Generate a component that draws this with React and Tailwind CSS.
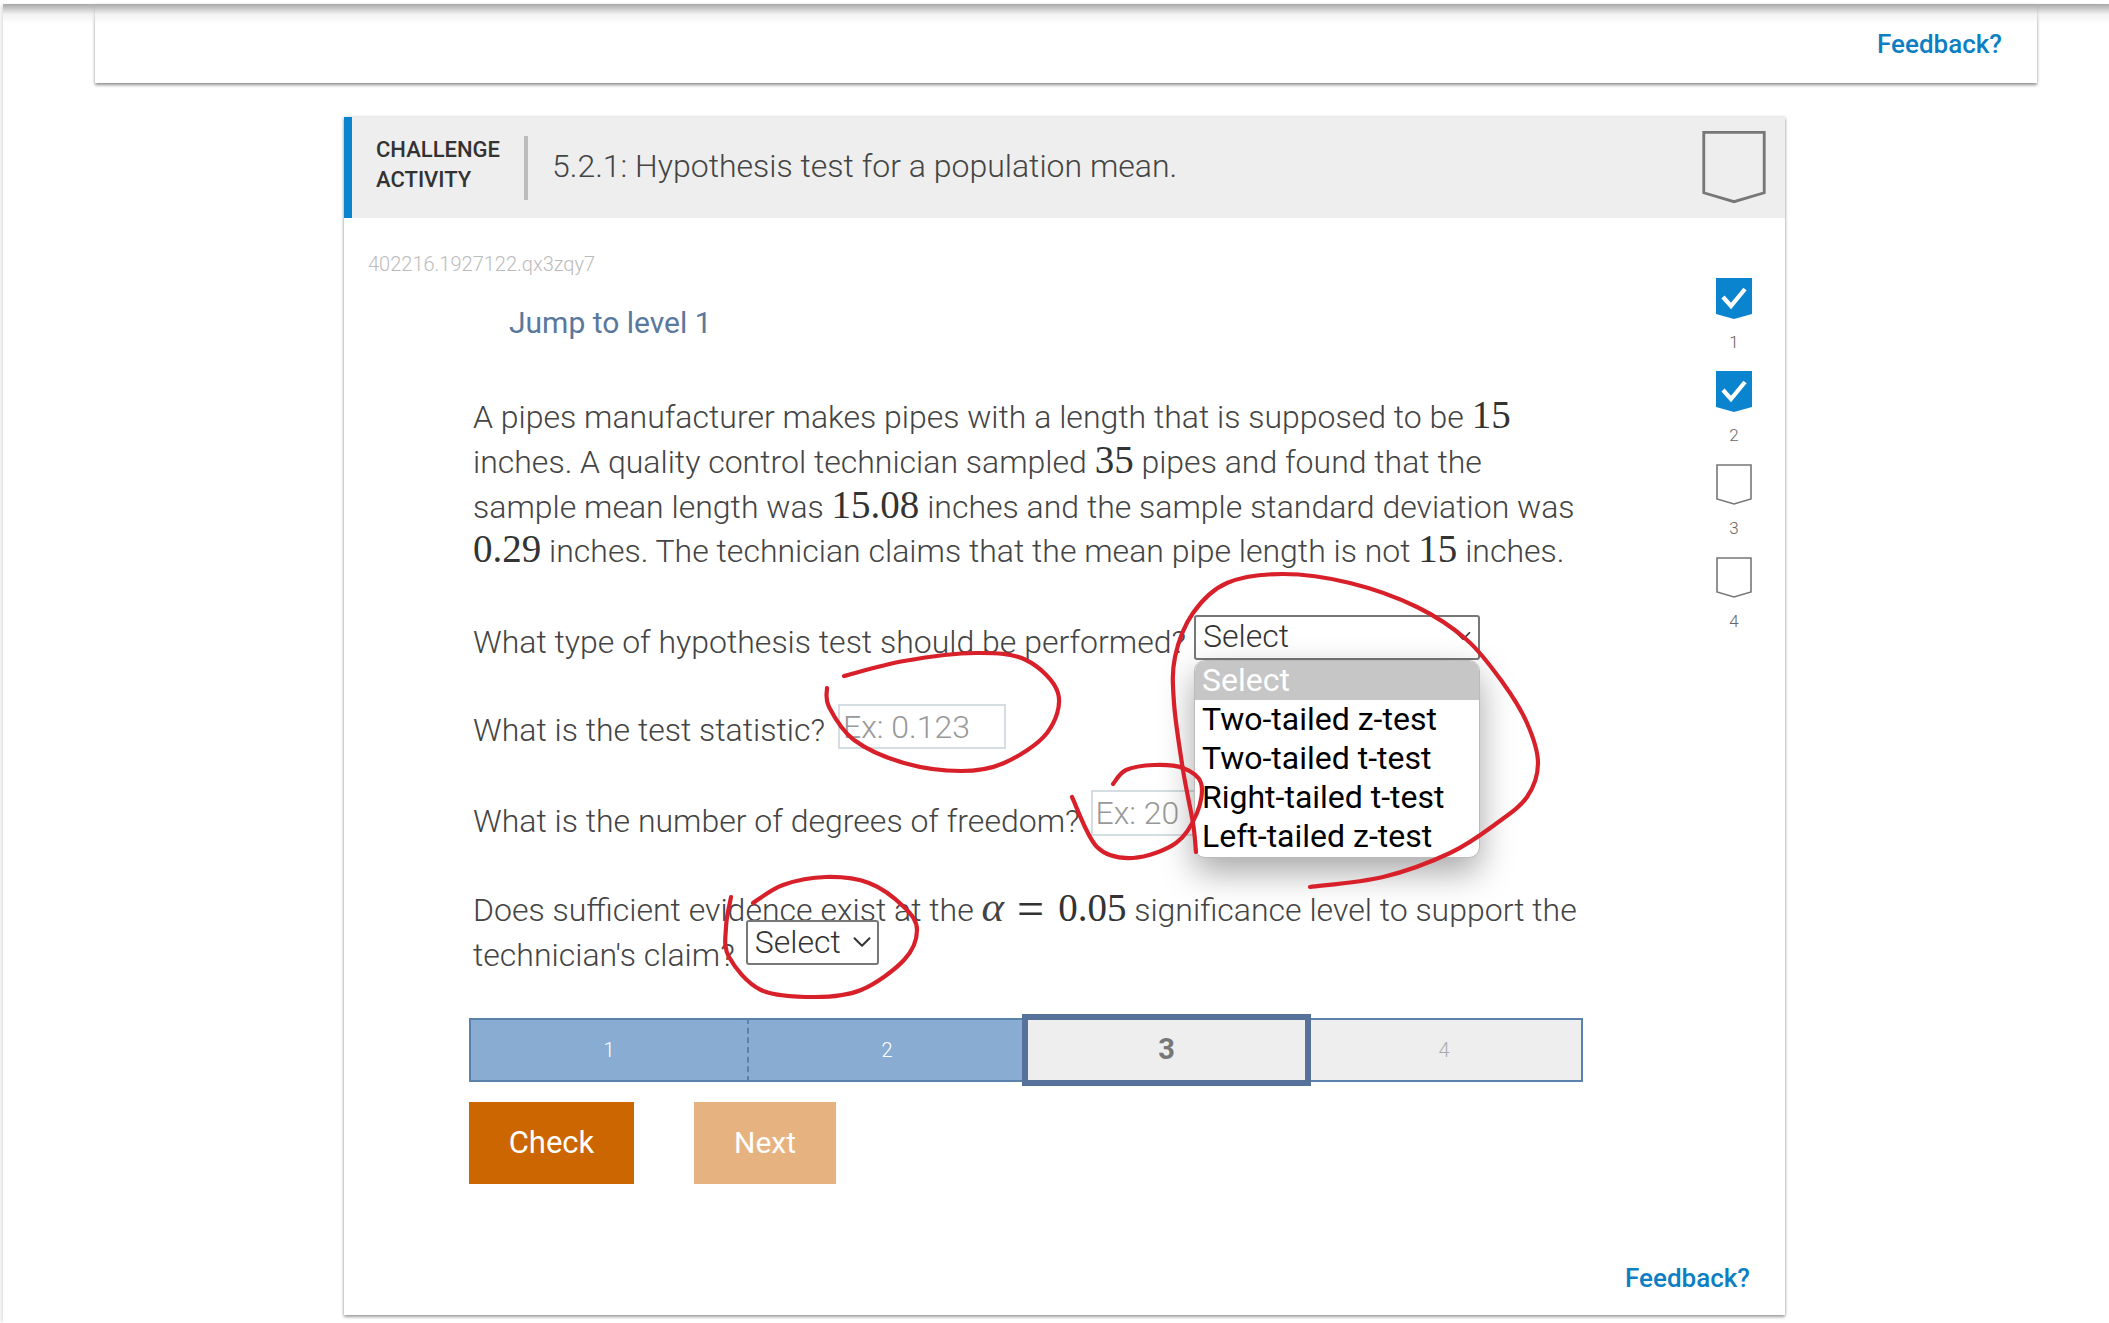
import React from 'react';
import { ChevronDown } from 'lucide-react';

const roboto = { fontFamily: 'Roboto, sans-serif' };
const serif = { fontFamily: '"Liberation Serif", serif' };

// red pen marks, traced off the screenshot
const marks = [
  [[1196,852],[1193,823],[1183,770],[1174,703],[1175,657],[1193,613],[1227,583],[1283,574],[1350,583],[1417,607],[1467,640],[1503,683],[1527,723],[1538,763],[1527,797],[1497,823],[1450,853],[1383,877],[1310,887]],
  [[844,676],[904,661],[976,653],[1026,660],[1058,693],[1047,733],[1004,763],[961,771],[904,763],[854,740],[829,707],[827,688]],
  [[1113,784],[1126,770],[1154,765],[1183,768],[1201,783],[1197,813],[1176,843],[1133,858],[1097,847],[1072,797]],
  [[753,903],[783,885],[826,877],[869,883],[904,907],[917,930],[904,960],[861,990],[815,997],[761,990],[729,957],[726,927],[731,897]],
];

const smooth = (pts) => {
  let d = `M${pts[0][0]} ${pts[0][1]}`;
  for (let i = 0; i < pts.length - 1; i++) {
    const p0 = pts[i - 1] || pts[i];
    const p1 = pts[i];
    const p2 = pts[i + 1];
    const p3 = pts[i + 2] || p2;
    d += ` C${p1[0] + (p2[0] - p0[0]) / 6} ${p1[1] + (p2[1] - p0[1]) / 6} ${p2[0] - (p3[0] - p1[0]) / 6} ${p2[1] - (p3[1] - p1[1]) / 6} ${p2[0]} ${p2[1]}`;
  }
  return d;
};

const Num = ({ children }) => (
  <span className="text-[39px] leading-[0] text-[#333]" style={serif}>{children}</span>
);

const Shield = ({ done, w = 36, h = 41 }) => (
  <svg width={w} height={h} viewBox="0 0 36 41" className="block">
    {done ? (
      <>
        <path d="M0 0H36V36L18 41L0 36Z" fill="#0b84cf" />
        <path d="M7 19L15 28L29 11" fill="none" stroke="#fff" strokeWidth="4.2" />
      </>
    ) : (
      <path d="M1 1H35V35L18 40L1 35Z" fill="none" stroke="#777" strokeWidth="1.6" />
    )}
  </svg>
);

const App = () => {
  return (
    <div className="relative w-[2109px] h-[1323px] overflow-hidden bg-white font-light text-[#444]" style={roboto}>
      <div className="mt-[4px] ml-[3px] h-[1319px] bg-white shadow-[-3px_0_3px_-1px_rgba(0,0,0,0.12)]">
        <div className="relative ml-[92px] w-[1942px] h-[79px] flex justify-end items-start pt-[20px] pr-[35px] bg-white shadow-[0_2px_3px_rgba(0,0,0,0.45)]">
          <a className="text-[26px] leading-[40px] font-medium text-[#0c7fc4]">Feedback?</a>
        </div>

        <div className="mt-[34px] ml-[341px] w-[1441px] h-[1198px] bg-white shadow-[0_2px_3px_rgba(0,0,0,0.35),0_0_3px_rgba(0,0,0,0.18)]">
          <div className="h-[101px] flex items-center bg-[#eeeeee] border-l-[8px] border-[#0b84cf] pl-[24px] pr-[19px]">
            <div className="-mt-[5px] text-[22px] leading-[30px] font-medium text-[#333] w-[148px]">CHALLENGE<br />ACTIVITY</div>
            <div className="w-[4px] h-[64px] bg-[#bcbcbc]"></div>
            <div className="ml-[24px] -mt-[3px] flex-1 text-[32px] text-[#444]">5.2.1: Hypothesis test for a population mean.</div>
            <div className="-mt-[1px]"><Shield w={64} h={74} /></div>
          </div>

          <div className="flex">
            <div className="w-[1372px] pl-[24px]">
              <div className="pt-[34px] text-[20px] leading-[24px] text-[#bbbbbb]">402216.1927122.qx3zqy7</div>
              <div className="mt-[27px] ml-[141px] text-[30px] leading-[40px] font-normal text-[#5a789c]">Jump to level 1</div>

              <div className="ml-[105px] w-[1130px] text-[32px]">
                <p className="mt-[52px] leading-[44.8px]">
                  A pipes manufacturer makes pipes with a length that is supposed to be <Num>15</Num><br />
                  inches. A quality control technician sampled <Num>35</Num> pipes and found that the<br />
                  sample mean length was <Num>15.08</Num> inches and the sample standard deviation was<br />
                  <Num>0.29</Num> inches. The technician claims that the mean pipe length is not <Num>15</Num> inches.
                </p>

                <div className="relative mt-[41px] h-[45px] flex items-start">
                  <span className="pt-[5px] leading-[45px]">What type of hypothesis test should be performed?</span>
                  <div className="absolute left-[721px] top-0 w-[286px] h-[45px] flex items-center justify-between pb-[3px] pl-[7px] pr-[2px] border-2 border-[#777] rounded-[3px] bg-white font-light text-[#333]">
                    Select
                    <ChevronDown size={26} strokeWidth={1.6} />
                  </div>
                  <div className="absolute z-10 left-[721px] top-[45px] w-[286px] h-[198px] rounded-[11px] overflow-hidden bg-white border border-[#bbb] leading-[39px] font-normal text-black shadow-[0_14px_34px_rgba(0,0,0,0.35)]">
                    <div className="h-[39px] pl-[7px] bg-[#c6c6c6] text-white">Select</div>
                    <div className="pl-[7px]">Two-tailed z-test</div>
                    <div className="pl-[7px]">Two-tailed t-test</div>
                    <div className="pl-[7px]">Right-tailed t-test</div>
                    <div className="pl-[7px]">Left-tailed z-test</div>
                  </div>
                </div>

                <div className="mt-[44px] h-[45px] flex items-start">
                  <span className="pt-[4px] leading-[45px]">What is the test statistic?</span>
                  <input placeholder="Ex: 0.123" className="ml-[13px] w-[168px] h-[45px] pl-[3px] border-2 border-[#d3dde2] font-light outline-none placeholder:text-[#999]" />
                </div>

                <div className="mt-[41px] h-[46px] flex items-start">
                  <span className="pt-[9px] leading-[45px]">What is the number of degrees of freedom?</span>
                  <input placeholder="Ex: 20" className="ml-[11px] w-[106px] h-[46px] pl-[3px] border-2 border-[#d3dde2] font-light outline-none placeholder:text-[#999]" />
                </div>

                <div className="mt-[52px] leading-[44.8px] whitespace-nowrap">
                  Does sufficient evidence exist at the <span className="text-[43px] leading-[0] italic" style={serif}>α</span><span className="text-[48px] leading-[0] ml-[13px] mr-[14px] align-[-4px] text-[#333]" style={serif}>=</span><Num>0.05</Num> significance level to support the
                </div>
                <div className="flex items-start h-[44.8px]">
                  <span className="leading-[44.8px]">technician's claim?</span>
                  <div className="ml-[11px] -mt-[13px] w-[133px] h-[45px] flex items-center justify-between pl-[7px] pr-0 border-2 border-[#777] rounded-[3px] bg-white text-[#333]">
                    Select
                    <ChevronDown size={30} strokeWidth={1.6} />
                  </div>
                </div>
              </div>

              <div className="mt-[40px] ml-[101px] w-[1114px] h-[64px] flex items-center text-[20px]">
                <div className="w-[280px] h-[64px] flex items-center justify-center bg-[#88acd2] border-y-2 border-l-2 border-[#5b82ab] border-r-2 border-r-[#5b82ab] text-white" style={{ borderRightStyle: 'dashed' }}>1</div>
                <div className="w-[273px] h-[64px] pl-[3px] flex items-center justify-center bg-[#88acd2] border-y-2 border-[#5b82ab] text-white">2</div>
                <div className="w-[289px] h-[72px] flex items-center justify-center bg-[#eeeeee] border-[6px] border-[#56719a] text-[29px] font-bold text-[#777]">3</div>
                <div className="flex-1 h-[64px] pr-[4px] flex items-center justify-center bg-[#eeeeee] border-y-2 border-r-2 border-[#5b82ab] text-[#aaa]">4</div>
              </div>

              <div className="mt-[20px] ml-[101px] flex gap-[60px] font-normal text-white">
                <button className="w-[165px] h-[82px] text-[31px] bg-[#cc6600]">Check</button>
                <button className="w-[142px] h-[82px] text-[30px] bg-[#e6b380]">Next</button>
              </div>
            </div>

            <div className="pt-[60px] w-[36px] flex flex-col gap-[52px] text-center text-[17px] leading-[20px] text-[#666]">
              {[1, 2, 3, 4].map((n) => (
                <div key={n} className="h-[41px]">
                  <Shield done={n < 3} />
                  <div className="mt-[13px]">{n}</div>
                </div>
              ))}
            </div>
          </div>

          <div className="mt-[79px] pr-[35px] text-right">
            <a className="text-[26px] leading-[30px] font-medium text-[#0c7fc4]">Feedback?</a>
          </div>
        </div>
      </div>

      {/* shadow of the sticky bar falls over everything at the very top */}
      <div className="absolute left-[3px] right-0 top-[4px] h-[20px] z-10 pointer-events-none bg-gradient-to-b from-[#a8a8a8] via-[#e8e8e8]/60 to-transparent"></div>

      <svg className="absolute inset-0 z-20 pointer-events-none" width="2109" height="1323" fill="none" stroke="#d8202a" strokeWidth="4.2" strokeLinecap="round">
        {marks.map((m, i) => <path key={i} d={smooth(m)} />)}
      </svg>
    </div>
  );
};

export default App;
